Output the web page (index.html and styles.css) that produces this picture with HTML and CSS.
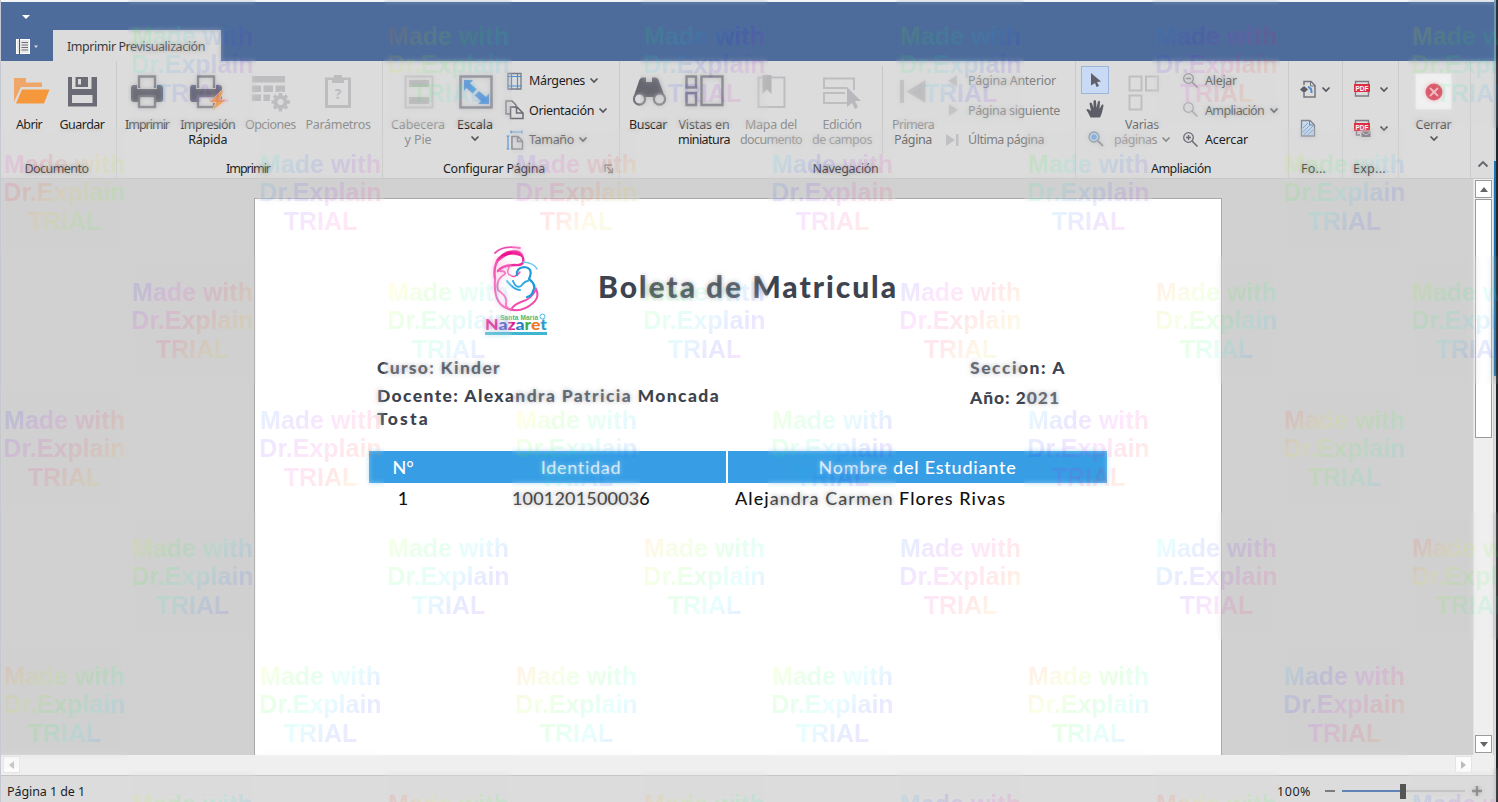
FILE: index.html
```html
<!DOCTYPE html>
<html lang="es">
<head>
<meta charset="utf-8">
<title>Imprimir Previsualización</title>
<link rel="stylesheet" href="styles.css">
</head>
<body>
<svg width="0" height="0" class="defs">
  <symbol id="chev" viewBox="0 0 10 7"><path d="M1.5 1.5L5 5L8.5 1.5" fill="none" stroke="#55565c" stroke-width="1.7"/></symbol>
  <symbol id="printer" viewBox="0 0 34 34">
    <path d="M9 13V1.500H25V13" fill="none" stroke="#7b7c84" stroke-width="2.400"/>
    <path d="M1 13q0-3 3-3H7V14H27V10H30q3 0 3 3V24q0 3-3 3H4q-3 0-3-3z" fill="#6a6b74"/>
    <rect x="9" y="21" width="16" height="11" fill="#dcdcdc" stroke="#7b7c84" stroke-width="2.400"/>
  </symbol>
  <symbol id="pdf" viewBox="0 0 20 20">
    <path d="M3.500 7V2.500H16.500V7M3.500 12V17H16.500V12" fill="none" stroke="#7b7c84" stroke-width="1.400"/>
    <rect x="2" y="5" width="16" height="8" fill="#dc2f45"/>
    <text x="10" y="11.600" class="pdf-t">PDF</text>
  </symbol>
</svg>
<div class="window">
  <div class="edge-left"></div>
  <div class="app">
    <header class="titlebar">
      <div class="quick"><svg width="8" height="5"><path d="M0 0H8L4 4z" fill="#fff"/></svg></div>
      <div class="tabs">
        <div class="appmenu">
          <svg width="24" height="16"><rect x=".5" y=".5" width="13" height="14" fill="#e8e8e8" stroke="#fff"/><path d="M3.500 0V15" stroke="#4f5560" stroke-width="1"/><path d="M5.500 3.500H12M5.500 6H12M5.500 8.500H12M5.500 11H12" stroke="#6b707a" stroke-width="1"/><path d="M18 6.500H22L20 9z" fill="#ddd"/></svg>
        </div>
        <div class="tab"><span data-w="138">Imprimir Previsualización</span></div>
      </div>
    </header>

    <nav class="ribbon">
      <section class="group g-doc">
        <div class="tools">
          <div class="big w56"><svg width="36" height="34"><path d="M3 3H15V7.500H31V12H10L3 27z" fill="#eea768"/><path d="M11 14.500H38.500L33 28.500H5z" fill="#f5973b"/></svg><span data-w="26">Abrir</span></div>
          <div class="big w50"><svg width="34" height="34"><path fill-rule="evenodd" d="M3 2H7V14H26.500V2H32V31.500H3zM7 20V28H27.500V20z" fill="#6a6b74"/><path fill-rule="evenodd" d="M10.500 2H23V12H10.500zM13 4V9.500H16V4z" fill="#6a6b74"/></svg><span data-w="45">Guardar</span></div>
        </div>
        <footer><span data-w="64">Documento</span></footer>
      </section>
      <section class="group g-print">
        <div class="tools">
          <div class="big w52"><svg width="34" height="34"><use href="#printer"/></svg><span data-w="44" class="soft">Imprimir</span></div>
          <div class="big w60"><svg width="36" height="34"><use href="#printer" width="34" height="34" x="-1"/><path d="M31 16L19 27.500H26L22 36L37 24.500H29.500L34 16z" fill="#f09a4c" stroke="#dcdcdc" stroke-width=".8"/></svg><span data-w="55" class="soft">Impresión</span><span data-w="39">Rápida</span></div>
          <div class="big w56 off"><svg width="38" height="36"><g fill="#bdbdc0"><path d="M1 1H34V7.500H1zM1 10.500H10V17H1zM12.500 10.500H22V17H12.500zM24.500 10.500H34V17H24.500zM1 19.500H10V26H1zM12.500 19.500H19V26H12.500z"/><circle cx="29.500" cy="27" r="10.500" fill="#dcdcdc"/><circle cx="29.500" cy="27" r="5" fill="none" stroke="#bdbdc0" stroke-width="4"/><path d="M29.500 18V21M29.500 33V36.500M20.500 27H23M36 27H39M23 20.500L25.500 23M36 20.500L33.500 23M23 33.500L25.500 31M36 33.500L33.500 31" stroke="#bdbdc0" stroke-width="3.500"/></g></svg><span data-w="51">Opciones</span></div>
          <div class="big w70 off"><svg width="34" height="34"><path d="M5.500 4V31.500H28.500V4" fill="none" stroke="#bdbdc0" stroke-width="3"/><path d="M4 2.500H30V5H4zM13 0H21V3H23V8H11V3H13z" fill="#bdbdc0"/><text x="17" y="23.500" class="q">?</text></svg><span data-w="65">Parámetros</span></div>
        </div>
        <footer><span data-w="44">Imprimir</span></footer>
      </section>
      <section class="group g-page">
        <div class="tools">
          <div class="big w56 off"><svg width="34" height="34"><path d="M4.500 1.500H31.500V32.500H4.500z" fill="none" stroke="#c0c0c2" stroke-width="2"/><path d="M8 5H28V12H8zM8 22H28V29H8z" fill="#b9b9bc"/></svg><span data-w="54">Cabecera</span><span data-w="27">y Pie</span></div>
          <div class="big w44 esc"><svg width="34" height="34"><rect x="2.500" y="1.500" width="31" height="31" fill="none" stroke="#858690" stroke-width="2.500"/><path d="M6 5H15L12 8.500L28 22L31 18.500V29H20L23 26L8.500 13L6 16z" fill="#5b98d8"/><path d="M15.500 19.500L21 14" stroke="#dcdcdc" stroke-width="3"/></svg><span data-w="36">Escala</span><svg class="dd" width="10" height="7"><use href="#chev"/></svg></div>
          <div class="col c-page">
            <div class="row"><svg width="20" height="20"><path d="M3 2.500H16V18H3z" fill="none" stroke="#7b7c84" stroke-width="1.300"/><path d="M6.500 2V19M12.500 2V19M2 5.500H17M2 15H17" stroke="#4d8fd0" stroke-width="1.200"/></svg><span data-w="56">Márgenes</span><svg width="10" height="7"><use href="#chev"/></svg></div>
            <div class="row"><svg width="20" height="20"><path d="M5 14H1V1H7L11 5V8" fill="none" stroke="#7b7c84" stroke-width="1.500"/><path d="M5.500 7H12L18 13V18.500H5.500zM11.500 7.500V13H18" fill="none" stroke="#6b6c74" stroke-width="1.500"/></svg><span data-w="65">Orientación</span><svg width="10" height="7"><use href="#chev"/></svg></div>
            <div class="row soft"><svg width="20" height="20"><path d="M7 6.500H13L17.500 11V19H7zM12.500 7V11.500H17" fill="none" stroke="#85868e" stroke-width="1.500"/><path d="M6 2H17M6 .5V3.500M17 .5V3.500M3 6V19M1.500 6H4.500M1.500 19H4.500" stroke="#5b98d8" stroke-width="1.200"/></svg><span data-w="45">Tamaño</span><svg width="10" height="7"><use href="#chev"/></svg></div>
          </div>
        </div>
        <footer><span data-w="102">Configurar Página</span><svg class="launch" width="10" height="10"><path d="M1 8V1H8M3 3L8 8M8.500 4V8.500H4" fill="none" stroke="#85858a" stroke-width="1.300"/></svg></footer>
      </section>
      <section class="group g-nav">
        <div class="tools">
          <div class="big w44"><svg width="34" height="34"><path d="M2.500 22L8 6Q9 2.500 12 2.500H15V7H21V2.500H24Q27 2.500 28 6L34 22z" fill="#666771"/><circle cx="8.500" cy="24" r="5.600" fill="#dcdcdc" stroke="#77787f" stroke-width="2.200"/><circle cx="28.500" cy="24" r="5.600" fill="#dcdcdc" stroke="#77787f" stroke-width="2.200"/></svg><span data-w="38">Buscar</span></div>
          <div class="big w56"><svg width="38" height="34"><path d="M1.500 1.500H11V12.500H1.500zM1.500 18H11V30H1.500zM16.500 1.500H37.500V30H16.500z" fill="none" stroke="#777881" stroke-width="2.400"/></svg><span data-w="51" class="soft">Vistas en</span><span data-w="52">miniatura</span></div>
          <div class="big w66 off"><svg width="34" height="34"><path d="M4.500 2.500H30.500V32H4.500z" fill="none" stroke="#bebec1" stroke-width="2"/><path d="M8.500 0H17.500V19L13 14.500L8.500 19z" fill="#b6b6b9"/></svg><span data-w="52">Mapa del</span><span data-w="62">documento</span></div>
          <div class="big w68 off"><svg width="38" height="34"><path d="M31 15V3.500H1V13H24M22 18H1V28H24" fill="none" stroke="#bebec1" stroke-width="2"/><path d="M24 12L38 26H32L35 32L32 34L29 28L24 32z" fill="#b9b9bd"/></svg><span data-w="39">Edición</span><span data-w="60">de campos</span></div>
          <div class="vline"></div>
          <div class="big w48 off"><svg width="34" height="34"><path d="M4 5H8V28H4zM29.500 5V28L10.500 16.500z" fill="#bdbdc0"/></svg><span data-w="42">Primera</span><span data-w="38" class="mid">Página</span></div>
          <div class="col c-nav">
            <div class="row off"><svg width="16" height="16"><path d="M13 2V14L4 8z" fill="#c0c0c3"/></svg><span data-w="88">Página Anterior</span></div>
            <div class="row off"><svg width="16" height="16"><path d="M5 2V14L14 8z" fill="#c0c0c3"/></svg><span data-w="92">Página siguiente</span></div>
            <div class="row off"><svg width="16" height="16"><path d="M2 2V14L11 8zM12 2H14.500V14H12z" fill="#c0c0c3"/></svg><span data-w="76">Última página</span></div>
          </div>
        </div>
        <footer><span data-w="66">Navegación</span></footer>
      </section>
      <section class="group g-zoom">
        <div class="tools">
          <div class="mini">
            <div class="pick"><svg width="12" height="16"><path d="M2 1L12 9.500L8 10L10 14L7.500 15L6 11L2 13.500z" fill="#5f6069"/></svg></div>
            <div class="slot"><svg width="20" height="20"><path d="M5.500 18.500Q3.500 14 1.500 11Q2 8.500 6 12L4.500 4.500Q6 2.500 7 4.500L8.500 9L8.500 2Q10 0 11 2L11.500 9L13 2.500Q14.500 1 15 3L14.500 10L17 5.500Q18.500 5 18.500 6.500Q17 15 15 18.500z" fill="#5c5d67"/></svg></div>
            <div class="slot"><svg width="18" height="18"><circle cx="8" cy="7" r="5" fill="#c5d8ec" stroke="#8d9098" stroke-width="1.300"/><circle cx="8" cy="7" r="2.700" fill="#7eace0"/><path d="M12 11L17 16" stroke="#8a8b92" stroke-width="1.800"/></svg></div>
          </div>
          <div class="big w58 off"><svg width="34" height="34"><path d="M4.500 1.500H16.500V15.500H4.500zM21 1.500H33V15.500H21zM4.500 20.500H16.500V34.500H4.500z" fill="none" stroke="#bfbfc2" stroke-width="2"/></svg><span data-w="34" class="mid">Varias</span><span class="pair"><span data-w="43">páginas</span><svg width="10" height="7"><use href="#chev"/></svg></span></div>
          <div class="col c-zoom">
            <div class="row soft"><svg width="18" height="18"><circle cx="6.500" cy="6.500" r="4.800" fill="none" stroke="#85868e" stroke-width="1.300"/><path d="M10 10L15.500 15.500M4 6.500H9" stroke="#85868e" stroke-width="1.500"/></svg><span data-w="32">Alejar</span></div>
            <div class="row soft"><svg width="18" height="18"><circle cx="6.500" cy="6.500" r="4.800" fill="none" stroke="#9a9ba2" stroke-width="1.300"/><path d="M10 10L15.500 15.500" stroke="#9a9ba2" stroke-width="1.500"/></svg><span data-w="59">Ampliación</span><svg width="10" height="7"><use href="#chev"/></svg></div>
            <div class="row"><svg width="18" height="18"><circle cx="6.500" cy="6.500" r="4.800" fill="none" stroke="#6b6c74" stroke-width="1.300"/><path d="M10 10L15.500 15.500M4 6.500H9M6.500 4V9" stroke="#6b6c74" stroke-width="1.500"/></svg><span data-w="43">Acercar</span></div>
          </div>
        </div>
        <footer><span data-w="60">Ampliación</span></footer>
      </section>
      <section class="group g-bg">
        <div class="tools stack">
          <div class="pair2"><svg width="18" height="20"><path d="M5 6V2.500H12L16 6.500V18H5V14" fill="none" stroke="#74757d" stroke-width="1.500"/><path d="M11.500 2V7H16" fill="none" stroke="#74757d"/><path d="M1 10.500L5 7L9 10.500L5 14z" fill="#5d5e68"/><path d="M9 8Q13 9 12.500 14" fill="none" stroke="#4d8fd0" stroke-width="2"/></svg><svg width="10" height="7"><use href="#chev"/></svg></div>
          <div class="pair2"><svg width="18" height="20"><path d="M2.500 2.500H11L15.500 7V18H2.500z" fill="#c9d9ea" stroke="#85868e" stroke-width="1.300"/><path d="M10.500 2V7H15" fill="none" stroke="#85868e"/><path d="M4 10L9 5M4 14L12 6M5 16.500L14 8M9 16.500L14 12" stroke="#78a6d8"/></svg></div>
        </div>
        <footer><span data-w="25">Fo...</span></footer>
      </section>
      <section class="group g-exp">
        <div class="tools stack">
          <div class="pair2"><svg width="20" height="20"><use href="#pdf"/></svg><svg width="10" height="7"><use href="#chev"/></svg></div>
          <div class="pair2"><svg width="20" height="20"><path d="M3.500 7V2.500H16.500V7M4.500 12V17H8" fill="none" stroke="#7b7c84" stroke-width="1.400"/><rect x="2" y="5" width="16" height="8" fill="#dc2f45"/><text x="10" y="11.600" class="pdf-t">PDF</text><rect x="9" y="13" width="10" height="6.500" fill="#777881" stroke="#dcdcdc"/><path d="M9.500 14L14 17L18.500 14" fill="none" stroke="#dcdcdc"/></svg><svg width="10" height="7"><use href="#chev"/></svg></div>
        </div>
        <footer><span data-w="33">Exp...</span></footer>
      </section>
      <section class="group g-close">
        <div class="tools">
          <div class="big closebtn"><div class="closebox"><svg width="20" height="20"><circle cx="10" cy="10" r="8.500" fill="#d9455a"/><path d="M6 6L14 14M14 6L6 14" stroke="#f2dde0" stroke-width="1.800"/></svg></div><span data-w="36" class="soft">Cerrar</span><svg class="dd" width="10" height="7"><use href="#chev"/></svg></div>
        </div>
      </section>
      <div class="collapse"><svg width="12" height="8"><path d="M1.500 6.500L6 2L10.500 6.500" fill="none" stroke="#66676c" stroke-width="1.900"/></svg></div>
    </nav>

    <main class="view">
      <div class="canvas">
        <article class="sheet">
          <div class="head">
            <svg class="logo" width="64" height="92" viewBox="0 0 64 92">
              <g fill="none" stroke-linecap="round">
                <path d="M11 8Q19 0 36 3" stroke="#ef4db0" stroke-width="1.800"/>
                <path d="M11 34Q8 15 22 8Q36 3 39 13Q41 21 31 20Q19 20 14 26" stroke="#ee2c9f" stroke-width="2.400"/>
                <path d="M14 15Q26 4 37 10" stroke="#f0108f" stroke-width="3"/>
                <path d="M16 26Q22 26 21 29Q11 35 14 45Q24 52 22 58Q21 65 30 65" stroke="#f160b8" stroke-width="2"/>
                <path d="M11 34Q9 60 25 64Q38 68 49 58Q56 52 52 44Q48 54 37 57Q29 60 27 65" stroke="#ef4db0" stroke-width="2"/>
                <path d="M25 22Q22 29 26 30Q31 34 36 27" stroke="#ef4db0" stroke-width="1.400"/>
                <path d="M29 36Q32 44 37 41Q41 36 44 36M23 36Q30 45 36 45" stroke="#35a9e1" stroke-width="2"/>
                <path d="M33 30Q32 23 40 22Q50 23 45 34Q53 40 49 46Q48 51 43 52" stroke="#1f9ad8" stroke-width="2.200"/>
                <path d="M39 17Q50 18 53 24" stroke="#71c8ee" stroke-width="1.600"/>
              </g>
              <text x="16" y="74.500" class="l1" textLength="38">Santa María</text>
              <circle cx="58.500" cy="71.500" r="2.500" fill="none" stroke="#4ab7e5"/>
              <text x="1" y="85" class="l2" textLength="62" lengthAdjust="spacingAndGlyphs"><tspan fill="#e0218a">N</tspan><tspan fill="#4b55c0">a</tspan><tspan fill="#d61e8c">z</tspan><tspan fill="#2a80c5">a</tspan><tspan fill="#43ad4c">r</tspan><tspan fill="#ec7a2a">e</tspan><tspan fill="#2b9dc8">t</tspan></text>
              <path d="M1 88.500H63" stroke="#41b6d0" stroke-width="3"/>
            </svg>
            <h1><span data-w="300">Boleta de Matricula</span></h1>
          </div>
          <div class="info">
            <div class="left"><p><span data-w="124">Curso: Kinder</span></p><p class="teacher"><span data-w="343">Docente: Alexandra Patricia Moncada</span><br><span data-w="53">Tosta</span></p></div>
            <div class="right"><p><span data-w="96">Seccion: A</span></p><p class="year"><span data-w="90">Año: 2021</span></p></div>
          </div>
          <div class="table">
            <div class="tr th"><div class="c1"><span data-w="21">N°</span></div><div class="c2"><span data-w="81">Identidad</span></div><div class="c3"><span data-w="198">Nombre del Estudiante</span></div></div>
            <div class="tr td"><div class="c1"><span>1</span></div><div class="c2"><span data-w="138">1001201500036</span></div><div class="c3"><span data-w="271">Alejandra Carmen Flores Rivas</span></div></div>
          </div>
        </article>
      </div>
      <div class="vscroll">
        <div class="sbtn"><svg width="8" height="5"><path d="M0 5H8L4 0z" fill="#666"/></svg></div>
        <div class="thumb"></div>
        <div class="sbtn down"><svg width="8" height="5"><path d="M0 0H8L4 5z" fill="#666"/></svg></div>
      </div>
    </main>
    <div class="hscroll">
      <div class="hbtn"><svg width="5" height="8"><path d="M5 0V8L0 4z" fill="#bbb"/></svg></div>
      <div class="hbtn"><svg width="5" height="8"><path d="M0 0V8L5 4z" fill="#bbb"/></svg></div>
    </div>
    <footer class="status">
      <span data-w="78">Página 1 de 1</span>
      <div class="zoomer"><span data-w="34">100%</span><i class="minus"></i><div class="track"><i class="done"></i><i class="knob"></i><i class="rest"></i></div><svg width="10" height="10"><path d="M5 0V10M0 5H10" stroke="#7d7d80" stroke-width="2.400"/></svg></div>
    </footer>
  </div>
  <div class="edge-right"><i class="e1"></i><i class="e2"></i><i class="e3"></i></div>
  <div class="marks" id="marks"></div>
</div>
<script src="app.js"></script>
</body>
</html>
```
FILE: styles.css
```css
* { box-sizing: border-box; }
body { margin: 0; }
.defs { position: absolute; }
.window { position: relative; width: 1498px; height: 802px; overflow: hidden; display: flex; background: #dcdcdc; font: 12.5px/15px "Noto Sans", sans-serif; color: #1e1e1e; }
.window span { white-space: nowrap; }
.edge-left { width: 1px; background: #c4c8d0; }
.app { width: 1493px; display: flex; flex-direction: column; }
.edge-right { width: 4px; background: linear-gradient(90deg, transparent 0 2px, #222527 2px); display: flex; flex-direction: column; }
.edge-right i { width: 2px; background: #1577b5; }
.e1 { height: 61px; opacity: .5; }
.e2 { height: 100px; opacity: .15; }
.e3 { height: 215px; }

.titlebar { height: 61px; background: #4d6c9b; border-top: 2px solid #f4f5f7; display: flex; flex-direction: column; justify-content: space-between; }
.quick { padding: 13px 0 0 21px; height: 20px; line-height: 0; }
.tabs { display: flex; height: 31px; }
.appmenu { width: 52px; padding: 9px 0 0 15px; }
.tab { width: 168px; background: #dcdcdc; padding: 9px 0 0 14px; color: #3a3a3a; }

.ribbon { height: 118px; background: #dcdcdc; border-bottom: 1px solid #c6c6c6; display: flex; }
.group { border-right: 1px solid #cbcbcb; height: 117px; display: flex; flex-direction: column; justify-content: space-between; }
.tools { display: flex; height: 98px; }
.group footer { height: 17px; text-align: center; position: relative; }
.g-doc { width: 116px; }
.g-doc footer { padding-right: 4px; }
.g-print { width: 266px; }
.g-print .tools { padding-left: 4px; gap: 4.7px; }
.g-print footer { padding-right: 3px; }
.g-page { width: 237px; }
.g-page .tools { padding-left: 7px; gap: 7px; }
.g-page footer { padding-right: 14px; }
.launch { position: absolute; right: 5px; top: 3px; }
.g-nav { width: 456px; }
.g-nav .tools { padding-left: 6px; gap: 6px; }
.g-nav footer { padding-right: 4px; }
.g-nav .w68 { margin-left: -2px; }
.g-zoom { width: 213px; }
.g-zoom .tools { padding-left: 5px; gap: 4px; }
.g-zoom footer { padding-right: 2px; }
.g-bg { width: 54px; }
.g-exp { width: 56px; }
.g-close { width: 72px; }
.g-bg footer { padding-right: 4px; }
.g-exp footer { padding-right: 2px; }

.big { display: flex; flex-direction: column; align-items: center; padding-top: 14px; flex: none; }
.big > svg:first-child { margin-bottom: 8px; height: 34px; overflow: visible; flex: none; }
.dd { margin-top: 3px; }
.w44 { width: 44px; } .w48 { width: 48px; } .w50 { width: 50px; } .w52 { width: 52px; } .w56 { width: 56px; }
.w58 { width: 58px; } .w60 { width: 60px; } .w66 { width: 66px; } .w68 { width: 68px; } .w70 { width: 70px; }
.off { color: #8f8f8f; }
.soft { color: #4c4c4c; }
.off .mid { color: #6f6f6f; }
.col { display: flex; flex-direction: column; padding-top: 5px; }
.row { display: flex; align-items: center; height: 29.5px; gap: 4px; }
.c-page { margin-left: 1px; }
.c-nav { margin-left: 1px; }
.c-nav .row { gap: 8px; }
.c-nav .off span { color: #808080; }
.c-zoom { margin-left: 7px; }
.c-zoom .row { gap: 5px; }
.vline { width: 1px; height: 88px; margin-top: 5px; background: #c6c6c6; }
.mini { width: 28px; padding-top: 5px; display: flex; flex-direction: column; align-items: center; }
.pick { width: 28px; height: 28px; background: #c9daf5; border: 1px solid #9db5dc; display: grid; place-items: center; }
.slot { height: 30px; display: grid; place-items: center; }
.pair { display: flex; align-items: center; gap: 4px; margin-left: 1px; }
.off .pair svg { opacity: .6; }
.stack { flex-direction: column; padding: 18px 0 0 10px; gap: 19px; }
.pair2 { display: flex; align-items: center; gap: 4px; height: 20px; }
.g-exp .pair2 { gap: 7px; }
.g-exp .stack { padding-left: 9px; }
.closebtn { width: 69px; padding-top: 12px; }
.closebox { width: 37px; height: 37px; background: #f1f1f1; border: 1px solid #e4e4e4; display: grid; place-items: center; margin-bottom: 7px; flex: none; }
.collapse { padding: 95px 0 0 6px; }
.q { font: bold 14px "Noto Sans"; fill: #bdbdc0; text-anchor: middle; }
.pdf-t { font: bold 6.5px "Liberation Sans"; fill: #fff; text-anchor: middle; }

.view { height: 576px; display: flex; background: #d1d1d1; }
.canvas { width: 1472px; padding: 19px 0 0 253px; }
.sheet { width: 968px; height: 557px; background: #fff; border: 1px solid #a9a9a9; border-bottom: 0; font-family: Lato, sans-serif; color: #3d444f; padding-left: 114px; }
.head { display: flex; height: 138px; padding: 46px 0 0 115px; }
.l1 { font: bold 6.5px "Liberation Sans"; fill: #4cb86a; }
.l2 { font: 900 15px Lato; }
.head h1 { margin: 18px 0 0 50px; font-size: 30px; line-height: 46px; font-weight: 900; }
.info { display: flex; font-size: 17.5px; line-height: 23px; font-weight: 900; padding: 19px 0 0 8px; height: 114px; }
.info p { margin: 0; }
.left { width: 593px; }
.info .teacher { margin-top: 5px; }
.info .year { margin-top: 7px; }
.tr { display: flex; width: 738px; font-size: 18px; font-weight: 500; }
.th { height: 32px; line-height: 32px; color: #fff; }
.th > div { background: #379ee5; }
.td { height: 31px; line-height: 30px; color: #111; }
.c1 { width: 68px; text-align: center; }
.c2 { width: 289px; padding-right: 1px; text-align: center; }
.c3 { width: 379px; margin-left: 2px; text-align: center; }
.td .c3 { text-align: left; padding-left: 7px; }

.vscroll { width: 20px; background: #efefef; border-left: 1px solid #e2e2e2; padding: 1px 1px 2px; display: flex; flex-direction: column; align-items: center; }
.sbtn { width: 17px; height: 18px; background: #fff; border: 1px solid #9b9b9b; display: grid; place-items: center; flex: none; }
.thumb { width: 17px; height: 239px; background: #fff; border: 1px solid #9b9b9b; margin-top: 1px; }
.down { margin-top: auto; }
.hscroll { height: 20px; background: #efefef; display: flex; justify-content: space-between; padding: 1px 22px 0 2px; }
.hbtn { width: 17px; height: 17px; background: #fcfcfc; border: 1px solid #e4e4e4; display: grid; place-items: center; }
.status { height: 27px; border-top: 1px solid #c4c4c4; background: #dcdcdc; display: flex; justify-content: space-between; align-items: center; padding: 4px 12px 0 6px; }
.zoomer { display: flex; align-items: center; }
.minus { width: 10px; height: 2px; background: #7d7d80; margin: 0 7px 0 14px; }
.track { display: flex; align-items: center; width: 123px; margin-right: 7px; }
.done { width: 58px; height: 2px; background: #6184b8; }
.knob { width: 6px; height: 15px; background: #555; }
.rest { flex: 1; height: 2px; background: #bebebe; }

/* trial watermark laid over the whole window */
.marks { position: absolute; inset: 0; display: grid; grid-template-columns: repeat(12, 128px); grid-auto-rows: 128px; pointer-events: none; }
.mark { position: relative; }
.mark::before { content: ""; position: absolute; inset: 0; backdrop-filter: blur(2.5px); opacity: .36; }
.mark p { position: relative; margin: 0; padding: 22px 0 0 1px; width: 128px; height: 128px; font: bold 25px/28.4px "Liberation Sans", sans-serif; text-align: center; color: transparent; opacity: .095;
  background: linear-gradient(135deg, hsl(calc(var(--h) - 38) 100% 50%), hsl(calc(var(--h) + 10) 100% 50%), hsl(calc(var(--h) + 58) 100% 50%), hsl(calc(var(--h) + 106) 100% 50%), hsl(calc(var(--h) + 154) 100% 50%), hsl(calc(var(--h) + 202) 100% 50%), hsl(calc(var(--h) + 250) 100% 50%));
  -webkit-background-clip: text; background-clip: text; }
```
FILE: app.js
```js
// Starting hue of each trial mark, row by row; odd rows begin in the first column.
const hues = [
  [110, 20, 130, 90, 200, 50],
  [300, 160, 250, 180, 110, 70],
  [240, 50, 90, 240, 20, 80],
  [230, 210, 50, 90, 190, 0],
  [60, 80, 30, 215, 165, 0],
  [20, 70, 25, 75, 15, 190],
  [60, 0, 30, 190, 0, 210]
];
const marks = document.getElementById('marks');
hues.forEach((row, r) => {
  for (let c = 0; c < 12; c++) {
    const cell = document.createElement('div');
    if ((c + r) % 2 === 1) {
      cell.className = 'mark';
      cell.style.setProperty('--h', row[c >> 1]);
      const p = document.createElement('p');
      for (const w of ['Made with', 'Dr.Explain', 'TRIAL']) {
        const s = document.createElement('span');
        s.textContent = w;
        p.append(s, document.createElement('br'));
      }
      cell.append(p);
    }
    marks.append(cell);
  }
});
// Tracks each label to its nominal width.
document.querySelectorAll('[data-w]').forEach(el => {
  const n = el.textContent.length;
  const ls = (Number(el.dataset.w) - el.getBoundingClientRect().width) / n;
  el.style.letterSpacing = ls.toFixed(3) + 'px';
});
```
